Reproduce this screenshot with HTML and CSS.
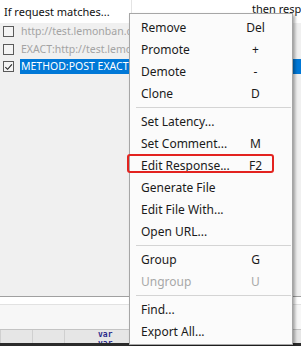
FILE: index.html
```html
<!DOCTYPE html>
<html>
<head>
<meta charset="utf-8">
<link rel="stylesheet" href="styles.css">
</head>
<body>
<div class="app">
  <div class="header">
    <div class="col-match">If request matches...</div>
    <div class="col-div"></div>
    <div class="col-then">then respond...</div>
  </div>
  <div class="list">
    <div class="row">
      <span class="cb"></span>
      <span class="rtext muted">http://test.lemonban.com/futureloan/mvc/api</span>
      <span class="rtail muted">p</span>
    </div>
    <div class="row">
      <span class="cb"></span>
      <span class="rtext muted">EXACT:http://test.lemonban.com/futureloan</span>
      <span class="rtail muted">\</span>
    </div>
    <div class="row">
      <span class="cb checked"><svg viewBox="0 0 10 10" width="10" height="10"><path d="M1.5 5.2 L4 7.6 L8.8 2.2" fill="none" stroke="#222" stroke-width="1.2"/></svg></span>
      <span class="rtext sel">METHOD:POST EXACT:http://test.lemonban.com</span>
      <span class="rtail sel">S</span>
    </div>
    <div class="list-fill"></div>
  </div>
  <div class="editor">
    <div class="ed-line"></div>
  </div>
  <div class="status">
    <div class="st-cell"></div>
    <div class="st-cell"></div>
    <div class="st-cell"></div>
    <div class="st-code">
      <span>var</span>
      <span>var</span>
    </div>
  </div>
  <div class="taskbar"></div>

  <div class="menu">
    <div class="item"><span class="lbl">Remove</span><span class="key">Del</span></div>
    <div class="item"><span class="lbl">Promote</span><span class="key">+</span></div>
    <div class="item"><span class="lbl">Demote</span><span class="key">-</span></div>
    <div class="item"><span class="lbl">Clone</span><span class="key">D</span></div>
    <div class="sep"></div>
    <div class="item"><span class="lbl">Set Latency...</span><span class="key"></span></div>
    <div class="item"><span class="lbl">Set Comment...</span><span class="key">M</span></div>
    <div class="item marked"><span class="lbl">Edit Response...</span><span class="key">F2</span></div>
    <div class="item"><span class="lbl">Generate File</span><span class="key"></span></div>
    <div class="item"><span class="lbl">Edit File With...</span><span class="key"></span></div>
    <div class="item"><span class="lbl">Open URL...</span><span class="key"></span></div>
    <div class="sep"></div>
    <div class="item"><span class="lbl">Group</span><span class="key">G</span></div>
    <div class="item disabled"><span class="lbl">Ungroup</span><span class="key">U</span></div>
    <div class="sep"></div>
    <div class="item"><span class="lbl">Find...</span><span class="key"></span></div>
    <div class="item"><span class="lbl">Export All...</span><span class="key"></span></div>
  </div>
</div>
</body>
</html>
```

FILE: styles.css
```css
html, body {
  margin: 0;
  padding: 0;
}
body {
  width: 301px;
  height: 346px;
  overflow: hidden;
  font-family: "Noto Sans", "Open Sans", sans-serif;
  font-size: 12px;
  color: #1a1a1a;
}
.app {
  position: relative;
  width: 301px;
  height: 346px;
  display: flex;
  flex-direction: column;
  background: #f0f0f0;
}
.header {
  height: 23px;
  flex: none;
  background: #ffffff;
  display: flex;
  align-items: flex-start;
  white-space: nowrap;
  overflow: hidden;
  font-size: 11px;
}
.col-match {
  flex: none;
  width: 127px;
  padding: 4px 0 0 4px;
  line-height: 16px;
  color: #111;
}
.col-div {
  flex: none;
  width: 1px;
  height: 13px;
  background: #e4e4e4;
  margin-right: 120px;
}
.col-then {
  flex: none;
  padding-top: 1px;
  line-height: 16px;
  color: #111;
}
.list {
  flex: 1;
  display: flex;
  flex-direction: column;
  background: #f0f0f0;
}
.row {
  height: 17.5px;
  flex: none;
  display: flex;
  align-items: center;
  white-space: nowrap;
  overflow: hidden;
  font-size: 10.5px;
}
.cb {
  flex: none;
  width: 9px;
  height: 9px;
  border: 1px solid #5a5a5a;
  background: #f4f4f4;
  margin: 0 6px 0 3px;
  display: flex;
  align-items: center;
  justify-content: center;
}
.cb svg {
  display: block;
}
.rtext {
  width: 251px;
  flex: none;
  overflow: hidden;
  line-height: 15px;
  padding-left: 1px;
}
.rtail {
  flex: 1;
  line-height: 15px;
  padding-left: 3px;
}
.muted {
  color: #a3a3a3;
}
.sel {
  background: #0078d7;
  color: #ffffff;
}
.list-fill {
  flex: 1;
}
.editor {
  flex: none;
  height: 32px;
  border-top: 1px solid #a0a0a0;
  background: #f7f7f7;
}
.ed-line {
  height: 7px;
  border-bottom: 1px solid #e2e2e2;
  background: #ffffff;
}
.status {
  flex: none;
  height: 13px;
  border-top: 1px solid #c4c4c4;
  background: #e6e6e6;
  display: flex;
  overflow: hidden;
}
.st-cell {
  width: 31px;
  border-left: 1px solid #d0d0d0;
}
.st-code {
  display: flex;
  flex-direction: column;
  margin-left: 2px;
  font-family: "DejaVu Sans Mono", monospace;
  font-size: 8px;
  line-height: 9px;
  color: #2a2a8a;
  font-weight: bold;
}
.taskbar {
  flex: none;
  height: 3px;
  background: #2b2b2b;
}
.menu {
  position: absolute;
  left: 129px;
  top: 13px;
  width: 162px;
  padding: 2px 0;
  background: #fbfbfb;
  border: 1px solid #a6a6a6;
  box-shadow: 2px 2px 3px rgba(0, 0, 0, 0.35);
}
.item {
  position: relative;
  height: 22px;
  display: flex;
  align-items: center;
  padding-left: 11px;
  white-space: nowrap;
}
.lbl {
  width: 102px;
}
.key {
  flex: 1;
  text-align: center;
  padding-right: 24px;
}
.item.disabled {
  color: #a8a8a8;
}
.item.marked::after {
  content: "";
  position: absolute;
  left: -3px;
  top: 0;
  width: 143px;
  height: 15px;
  border: 2px solid #e3231f;
  border-radius: 3px;
}
.sep {
  height: 1px;
  margin: 3px 1px 2px 6px;
  background: #d4d4d4;
}
```
